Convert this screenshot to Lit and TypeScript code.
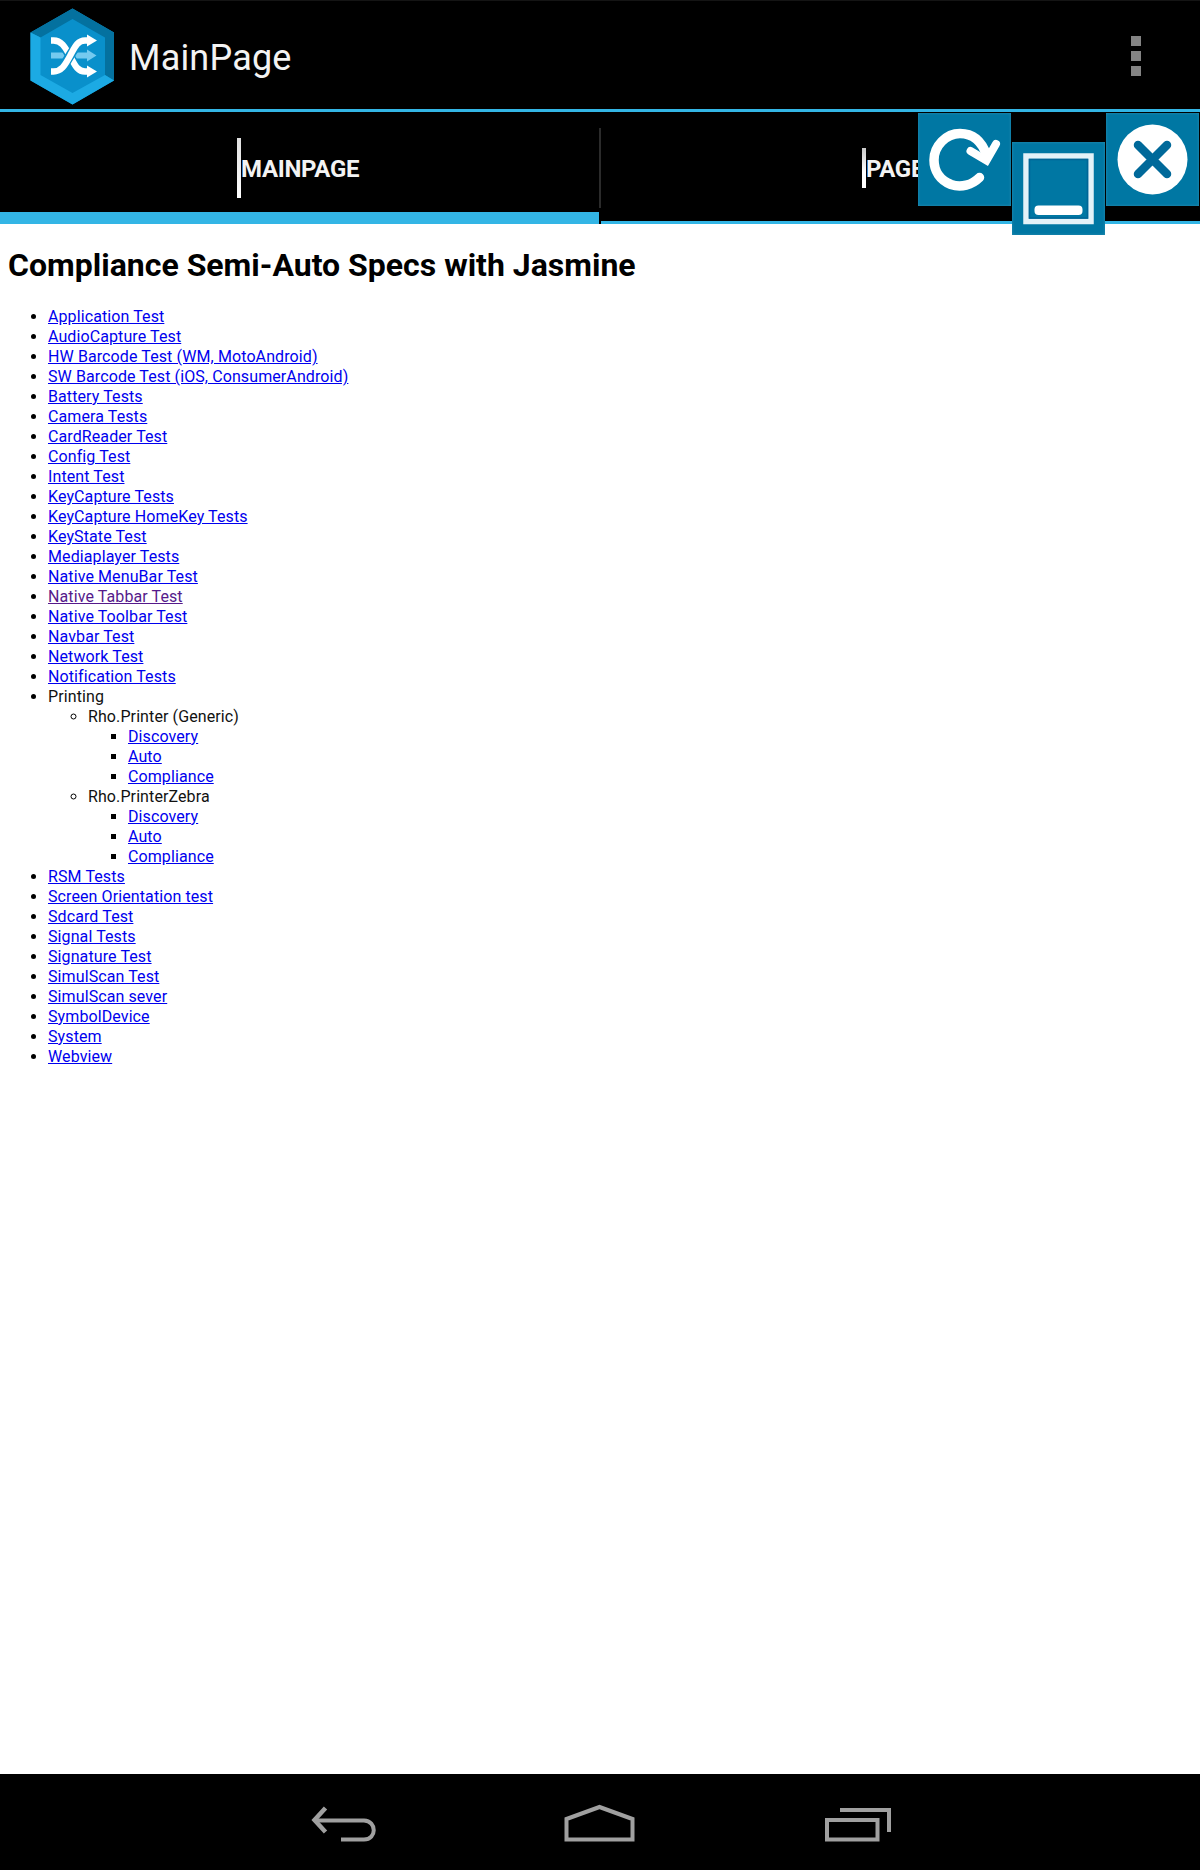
import { LitElement, html, css, svg, nothing, type TemplateResult } from "lit";
import { customElement } from "lit/decorators.js";
import { classMap } from "lit/directives/class-map.js";

interface Entry {
  label: string;
  link?: boolean;
  visited?: boolean;
  children?: Entry[];
}

const link = (label: string, visited = false): Entry => ({ label, link: true, visited });
const printerPages = ["Discovery", "Auto", "Compliance"].map((l) => link(l));

const ENTRIES: Entry[] = [
  ...[
    "Application Test",
    "AudioCapture Test",
    "HW Barcode Test (WM, MotoAndroid)",
    "SW Barcode Test (iOS, ConsumerAndroid)",
    "Battery Tests",
    "Camera Tests",
    "CardReader Test",
    "Config Test",
    "Intent Test",
    "KeyCapture Tests",
    "KeyCapture HomeKey Tests",
    "KeyState Test",
    "Mediaplayer Tests",
    "Native MenuBar Test",
  ].map((l) => link(l)),
  link("Native Tabbar Test", true),
  ...["Native Toolbar Test", "Navbar Test", "Network Test", "Notification Tests"].map((l) => link(l)),
  {
    label: "Printing",
    children: [
      { label: "Rho.Printer (Generic)", children: printerPages },
      { label: "Rho.PrinterZebra", children: printerPages },
    ],
  },
  ...[
    "RSM Tests",
    "Screen Orientation test",
    "Sdcard Test",
    "Signal Tests",
    "Signature Test",
    "SimulScan Test",
    "SimulScan sever",
    "SymbolDevice",
    "System",
    "Webview",
  ].map((l) => link(l)),
];

@customElement("action-bar")
export class ActionBar extends LitElement {
  static styles = css`
    :host {
      display: flex;
      align-items: center;
      box-sizing: border-box;
      height: 112px;
      padding: 0 58px 0 30px;
      background: #000;
      border-top: 1px solid #141414;
      border-bottom: 3px solid #33b5e5;
    }
    .logo {
      width: 85px;
      height: 97px;
      margin-top: 3px;
    }
    .title {
      flex: 1;
      margin: 6px 0 0 14px;
      font-size: 36px;
      line-height: 42px;
      letter-spacing: 0.2px;
      color: #f3f3f3;
    }
    .overflow {
      display: grid;
      gap: 5px;
      margin-top: 1px;
      margin-right: 1px;
    }
    .dot {
      width: 10px;
      height: 10px;
      background: #848484;
    }
  `;
  render() {
    return html`
      <svg class="logo" viewBox="0 0 85 97">
        <path fill="#0990cb" d="M42.5 0.5 84 24.5V72.5L42.5 96.5 0.5 72.5V24.5Z" />
        <path fill="#04719f" d="M42.5 0.5 84 24.5V72.5L75 67V29.5L42.5 11 10.5 29.5 0.5 24.5Z" />
        <path fill="#1caae4" d="M0.5 24.5 10.5 29.5V67L42.5 85 75 67 84 72.5 42.5 96.5 0.5 72.5Z" />
        <path fill="#75caef" d="M21 44.5H57V41.500L66.500 47.500 57 53.500V50.500H21Z" />
        <path fill="none" stroke="#0990cb" stroke-width="9" d="M27 33.500C34 37 37 43 40 48S46 60 52 63.500" />
        <path fill="none" stroke="#fff" stroke-width="6.4" d="M21 32.500H23.500C32 32.500 35.500 40 40 48S47 63.500 55 63.500H58" />
        <path fill="none" stroke="#0990cb" stroke-width="9.500" d="M34.500 56.500C38 51 42 44 46 38.500" />
        <path fill="none" stroke="#fff" stroke-width="6.4" d="M21 63.500H23.500C32 63.500 35.500 56 40 48S47 32.500 55 32.500H58" />
        <path fill="#fff" d="M57 26.500 67 32.500 57 38.500ZM57 57.500 67 63.500 57 69.500Z" />
      </svg>
      <div class="title">MainPage</div>
      <div class="overflow">
        <span class="dot"></span><span class="dot"></span><span class="dot"></span>
      </div>
    `;
  }
}

@customElement("tab-strip")
export class TabStrip extends LitElement {
  static styles = css`
    :host {
      display: grid;
      grid-template-columns: 599px 2px 599px;
      height: 112px;
      background: #000;
    }
    .tab {
      display: flex;
      justify-content: center;
      align-items: center;
      box-sizing: border-box;
      border-bottom: 3px solid #33b5e5;
      color: #f3f3f3;
      font-weight: 700;
      font-size: 24px;
      line-height: 28px;
    }
    .selected {
      border-bottom-width: 12px;
    }
    .divider {
      height: 80px;
      margin-top: 16px;
      background: #2b2b2b;
    }
    .mark {
      width: 4px;
      height: 60px;
      margin-top: 12px;
      background: linear-gradient(#e0e0e0, #fff);
    }
    .short {
      height: 40px;
      margin-top: 3px;
      background: linear-gradient(#c8c8c8, #fff 60%);
    }
    .label {
      width: 121px;
      margin-top: 13px;
      letter-spacing: -0.3px;
    }
    .second {
      width: 73px;
      margin-top: 4px;
    }
  `;
  render() {
    return html`
      <div class="tab selected"><span class="mark"></span><span class="label">MAINPAGE</span></div>
      <span class="divider"></span>
      <div class="tab"><span class="mark short"></span><span class="label second">PAGE</span></div>
    `;
  }
}

@customElement("floating-controls")
export class FloatingControls extends LitElement {
  static styles = css`
    :host {
      display: flex;
      gap: 1px;
      align-items: flex-start;
    }
    .control {
      width: 93px;
      height: 93px;
      background: #0077a3;
      box-shadow: inset 0 0 3px #2d8fb2;
    }
    .lowered {
      margin-top: 29px;
    }
    .icon {
      display: block;
    }
  `;
  private control(art: TemplateResult, lowered = false) {
    return html`<div class=${classMap({ control: true, lowered })}>
      <svg class="icon" width="93" height="93" viewBox="0 0 93 93">${art}</svg>
    </div>`;
  }
  render() {
    return html`
      ${this.control(svg`
        <g fill="none" stroke="#fff" stroke-width="9.500" stroke-linecap="round">
          <path d="M61.500 64.500C54 72 43 75 33 71.500 22 67 16 58 16 47 16 33 28 20.500 42 20.500 56 20.500 64 29 68.500 42" />
          <path stroke-width="8" d="M52.500 38 68.500 47.500 78 31" />
        </g>`)}
      ${this.control(
        svg`
        <rect x="14" y="14" width="65" height="65.500" fill="none" stroke="#e3f2f8" stroke-width="5.500" />
        <rect x="17.500" y="17.500" width="58" height="58.500" fill="none" stroke="#006596" stroke-width="1.500" />
        <rect x="22.500" y="63.500" width="48" height="9.500" rx="4" fill="#fff" />`,
        true,
      )}
      ${this.control(svg`
        <circle cx="46.500" cy="46.500" r="35" fill="#fff" />
        <path fill="none" stroke="#00699a" stroke-width="8.500" stroke-linecap="round" d="M32 32 61 61M61 32 32 61" />`)}
    `;
  }
}

@customElement("spec-page")
export class SpecPage extends LitElement {
  static styles = css`
    :host {
      display: block;
      padding: 20px 8px;
      background: #fff;
      color: #000;
      font-size: 16px;
      line-height: 20px;
    }
    .heading {
      margin: 0 0 21px;
      font-size: 32px;
      line-height: 42px;
      font-weight: 700;
    }
    .list {
      margin: 0;
      padding-left: 40px;
      letter-spacing: 0.1px;
    }
    .entry {
      color: #111;
    }
    .entry::marker {
      color: #000;
    }
    .link {
      color: #0000ee;
      text-decoration: underline;
    }
    .visited {
      color: #551a8b;
    }
  `;
  private list(entries: Entry[]): TemplateResult {
    return html`<ul class="list">
      ${entries.map(
        (e) => html`<li class="entry">
          ${e.link
            ? html`<a class=${classMap({ link: true, visited: !!e.visited })} href="#">${e.label}</a>`
            : e.label}
          ${e.children ? this.list(e.children) : nothing}
        </li>`,
      )}
    </ul>`;
  }
  render() {
    return html`<h1 class="heading">Compliance Semi-Auto Specs with Jasmine</h1>
      ${this.list(ENTRIES)}`;
  }
}

@customElement("system-nav")
export class SystemNav extends LitElement {
  static styles = css`
    :host {
      display: flex;
      justify-content: space-between;
      align-items: flex-start;
      box-sizing: border-box;
      height: 96px;
      padding: 30px 308px 0 310px;
      background: #000;
    }
    .icon {
      fill: none;
      stroke: #a0a0a0;
      stroke-width: 4;
    }
  `;
  render() {
    return html`
      <svg class="icon" width="66" height="40" viewBox="0 0 66 40">
        <path d="M4 16.500H54C67 17 67 35.500 54 35.500H31" />
        <path stroke-width="4.500" d="M15.500 4 4.500 16 15.500 28" />
      </svg>
      <svg class="icon" width="72" height="40" viewBox="0 0 72 40">
        <path d="M2.500 35.500V15L35.500 3 68.500 15V35.500Z" />
      </svg>
      <svg class="icon" width="68" height="40" viewBox="0 0 68 40">
        <path d="M3 16H53.500V35.500H3ZM16 6H65V28" />
      </svg>
    `;
  }
}

@customElement("app-root")
export class AppRoot extends LitElement {
  static styles = css`
    :host {
      display: flex;
      flex-direction: column;
      position: relative;
      width: 1200px;
      height: 1870px;
      overflow: hidden;
      background: #fff;
      font-family: Roboto, sans-serif;
    }
    .page {
      flex: 1;
    }
    .floating {
      position: absolute;
      top: 113px;
      right: 1px;
    }
  `;
  render() {
    return html`
      <action-bar></action-bar>
      <tab-strip></tab-strip>
      <spec-page class="page"></spec-page>
      <system-nav></system-nav>
      <floating-controls class="floating"></floating-controls>
    `;
  }
}
